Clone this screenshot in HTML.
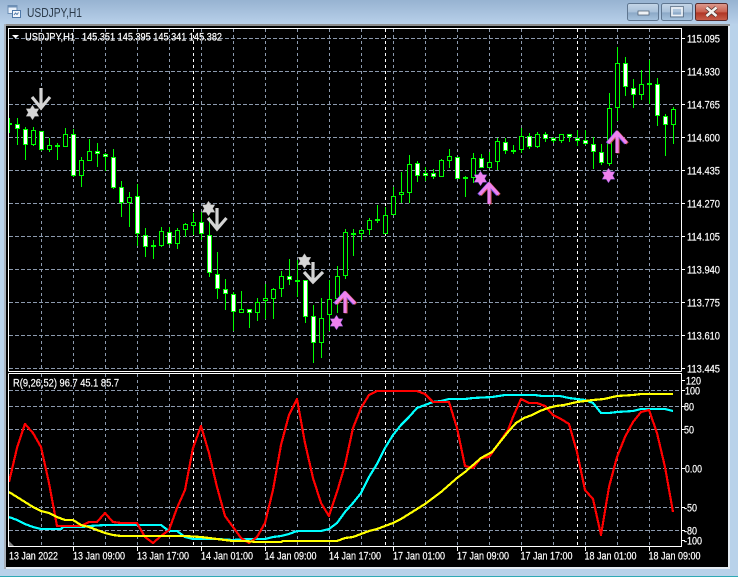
<!DOCTYPE html>
<html><head><meta charset="utf-8"><style>
html,body{margin:0;padding:0;background:#b9d2ea;width:738px;height:577px;overflow:hidden}
svg{display:block}
text{font-family:"Liberation Sans",sans-serif;font-size:11px;fill:#fff;stroke:#fff;stroke-width:.2}
</style></head><body>
<svg width="738" height="577" viewBox="0 0 738 577" xmlns="http://www.w3.org/2000/svg">
<defs>
<linearGradient id="t" x1="0" y1="0" x2="0" y2="1"><stop offset="0" stop-color="#97b3d1"/><stop offset="1" stop-color="#b8d0e9"/></linearGradient>
<linearGradient id="b1" x1="0" y1="0" x2="0" y2="1"><stop offset="0" stop-color="#c5d6e8"/><stop offset=".5" stop-color="#a9c1da"/><stop offset=".55" stop-color="#8ca9c7"/><stop offset="1" stop-color="#a8c4df"/></linearGradient>
<linearGradient id="b2" x1="0" y1="0" x2="0" y2="1"><stop offset="0" stop-color="#dd9c90"/><stop offset=".5" stop-color="#c9604f"/><stop offset=".55" stop-color="#b03524"/><stop offset="1" stop-color="#c8604c"/></linearGradient>
<clipPath id="c"><rect x="9" y="29" width="672" height="342"/></clipPath>
<clipPath id="s"><rect x="9" y="374" width="672" height="172"/></clipPath>
</defs>
<rect width="738" height="577" fill="#b9d2ea"/>
<rect width="738" height="24" fill="url(#t)"/>
<rect x="4" y="24" width="726" height="545" fill="#e4ebf2"/>
<rect x="4" y="24" width="726" height="2" fill="#8f8f8f"/>
<rect x="4" y="24" width="2" height="545" fill="#a8b0ba"/>
<rect x="6" y="26" width="722" height="541" fill="#000"/>
<rect x="0" y="576" width="738" height="1" fill="#2fa9b5"/>

<!-- title icon -->
<g>
<rect x="8" y="5.500" width="9" height="8" fill="#eaf2fb" stroke="#6d8fb5"/>
<rect x="8" y="5.500" width="9" height="2" fill="#6d8fb5"/>
<rect x="12.500" y="10.500" width="8" height="7" fill="#f2f6fb" stroke="#4f78a8"/>
<path d="M14 15l1.500-2 1.500 1.500 1.500-2" fill="none" stroke="#4f78a8"/>
</g>
<text x="27" y="17" textLength="55" lengthAdjust="spacingAndGlyphs" style="font-size:13px;fill:#2b3a4a;stroke:none">USDJPY,H1</text>

<!-- window buttons -->
<rect x="627.500" y="3.500" width="31" height="17" rx="2" fill="url(#b1)" stroke="#5f7690"/>
<rect x="638" y="11" width="11" height="4" fill="#eef2f6" stroke="#46566a" stroke-width=".7"/>
<rect x="661.500" y="3.500" width="31" height="17" rx="2" fill="url(#b1)" stroke="#5f7690"/>
<rect x="672" y="8" width="10" height="7.500" fill="none" stroke="#eef2f6" stroke-width="1.600"/>
<rect x="670.500" y="6.500" width="13" height="10.500" fill="none" stroke="#46566a" stroke-width=".6"/>
<rect x="695.500" y="3.500" width="32" height="17" rx="2" fill="url(#b2)" stroke="#5a2a2a"/>
<path d="M706.500 7.500l10 8.500M716.500 7.500l-10 8.500" stroke="#46302e" stroke-width="4"/>
<path d="M706.500 7.500l10 8.500M716.500 7.500l-10 8.500" stroke="#f4f2ee" stroke-width="2.600"/>

<!-- frames -->
<path d="M8.500 371.500V28.500H681.500V371.500M8.500 371.500H681.500" fill="none" stroke="#fff"/>
<path d="M8.500 373.500V546.500H681.500V373.500H8.500" fill="none" stroke="#fff"/>

<!-- grid -->
<g stroke="#8c9aae" fill="none" stroke-dasharray="4 2">
<path d="M9 38.500H681M9 71.500H681M9 104.500H681M9 137.500H681M9 170.500H681M9 203.500H681M9 236.500H681M9 269.500H681M9 302.500H681M9 335.500H681M9 368.500H681"/>
<path d="M9 390.500H681M9 406.500H681M9 429.500H681M9 468.500H681M9 507.500H681M9 530.500H681"/>
</g>
<g stroke="#8c9aae" fill="none" stroke-dasharray="3 3">
<path d="M41.500 29V371M73.500 29V371M105.500 29V371M137.500 29V371M169.500 29V371M201.500 29V371M233.500 29V371M265.500 29V371M297.500 29V371M329.500 29V371M361.500 29V371M393.500 29V371M425.500 29V371M457.500 29V371M489.500 29V371M521.500 29V371M553.500 29V371M585.500 29V371M617.500 29V371M649.500 29V371"/>
<path d="M41.500 374V546M73.500 374V546M105.500 374V546M137.500 374V546M169.500 374V546M201.500 374V546M233.500 374V546M265.500 374V546M297.500 374V546M329.500 374V546M361.500 374V546M393.500 374V546M425.500 374V546M457.500 374V546M489.500 374V546M521.500 374V546M553.500 374V546M585.500 374V546M617.500 374V546M649.500 374V546"/>
</g>
<path d="M193.500 29V371M385.500 29V371M577.500 29V371M193.500 374V546M385.500 374V546M577.500 374V546" stroke="#fff" stroke-dasharray="3 3" fill="none"/>

<!-- candles -->
<g clip-path="url(#c)" fill="none" stroke="#00ff00" shape-rendering="crispEdges">
<path d="M9.500 118V133M17.500 118V145M25.500 127V160M33.500 127V146M41.500 131V151M49.500 138V152M57.500 143V160M65.500 128V147M73.500 129V177M81.500 157V187M89.500 139V161M97.500 143V167M105.500 153V171M113.500 149V189M121.500 181V217M129.500 192V227M137.500 184V246M145.500 228V257M153.500 240V259M161.500 227V247M169.500 227V245M177.500 228V249M185.500 223V237M193.500 213V235M201.500 212V240M209.500 217V277M217.500 252V299M225.500 279V310M233.500 292V331M241.500 291V313M249.500 309V328M257.500 298V321M265.500 284V319M273.500 288V319M281.500 271V297M289.500 259V285M297.500 260V297M305.500 280V323M313.500 305V363M321.500 298V358M329.500 280V331M337.500 266V313M345.500 229V279M353.500 229V256M361.500 229V240M369.500 218V235M377.500 205V223M385.500 207V234M393.500 187V215M401.500 172V203M409.500 155V203M417.500 161V182M425.500 167V181M433.500 169V179M441.500 159V177M449.500 149V168M457.500 157V179M465.500 176V197M473.500 153V183M481.500 154V168M489.500 152V168M497.500 138V170M505.500 138V154M513.500 145V154M521.500 128V153M529.500 133V149M537.500 132V148M545.500 132V142M553.500 137V143M561.500 134V143M569.500 134V142M577.500 130V146M585.500 130V145M593.500 137V169M601.500 144V165M609.500 93V166M617.500 47V121M625.500 57V96M633.500 79V108M641.500 70V100M649.500 60V104M657.500 78V126M665.500 114V156M673.500 107V144"/>
<path stroke-width="2" d="M7 124h5M55 146h5M151 246h5M295 281h5M375 220h5M463 178h5M511 151h5M647 84h5"/>
<path fill="#000" d="M31.500 130.500h4v14h-4zM47.500 145.500h4v4h-4zM63.500 134.500h4v12h-4zM79.500 160.500h4v15h-4zM87.500 151.500h4v9h-4zM127.500 197.500h4v5h-4zM159.500 231.500h4v14h-4zM175.500 230.500h4v13h-4zM183.500 224.500h4v5h-4zM191.500 222.500h4v3h-4zM239.500 309.500h4v3h-4zM255.500 302.500h4v10h-4zM263.500 298.500h4v2h-4zM271.500 289.500h4v9h-4zM279.500 276.500h4v12h-4zM319.500 318.500h4v24h-4zM327.500 299.500h4v15h-4zM335.500 276.500h4v22h-4zM343.500 232.500h4v43h-4zM359.500 230.500h4v3h-4zM367.500 220.500h4v9h-4zM383.500 215.500h4v18h-4zM391.500 196.500h4v18h-4zM399.500 192.500h4v2h-4zM407.500 164.500h4v28h-4zM439.500 160.500h4v16h-4zM447.500 156.500h4v4h-4zM471.500 158.500h4v19h-4zM487.500 162.500h4v5h-4zM495.500 141.500h4v20h-4zM519.500 136.500h4v13h-4zM535.500 134.500h4v12h-4zM559.500 134.500h4v6h-4zM607.500 108.500h4v55h-4zM615.500 63.500h4v44h-4zM639.500 84.500h4v10h-4zM671.500 109.500h4v15h-4z"/>
<path fill="#fff" d="M15.500 124.500h4v4h-4zM23.500 129.500h4v15h-4zM39.500 131.500h4v18h-4zM71.500 134.500h4v41h-4zM95.500 151.500h4v2h-4zM103.500 154.500h4v2h-4zM111.500 157.500h4v30h-4zM119.500 187.500h4v15h-4zM135.500 196.500h4v37h-4zM143.500 235.500h4v11h-4zM167.500 232.500h4v11h-4zM199.500 222.500h4v11h-4zM207.500 235.500h4v37h-4zM215.500 274.500h4v14h-4zM223.500 289.500h4v4h-4zM231.500 294.500h4v17h-4zM247.500 309.500h4v3h-4zM287.500 276.500h4v3h-4zM303.500 280.500h4v36h-4zM311.500 316.500h4v26h-4zM351.500 233.500h4v1h-4zM415.500 163.500h4v12h-4zM423.500 173.500h4v2h-4zM431.500 173.500h4v3h-4zM455.500 157.500h4v21h-4zM479.500 158.500h4v9h-4zM503.500 142.500h4v8h-4zM527.500 136.500h4v10h-4zM543.500 134.500h4v4h-4zM551.500 138.500h4v2h-4zM567.500 134.500h4v2h-4zM575.500 138.500h4v2h-4zM583.500 140.500h4v3h-4zM591.500 144.500h4v7h-4zM599.500 152.500h4v10h-4zM623.500 63.500h4v23h-4zM631.500 88.500h4v6h-4zM655.500 84.500h4v31h-4zM663.500 116.500h4v8h-4z"/>
</g>

<!-- gray signals -->
<g fill="#d6d6d6" stroke="#a8a8a8" stroke-width=".5">
<polygon transform="translate(32.500 112.500)" points="0,-7.300 2.300,-3.700 6.300,-3.700 4.200,0 6.300,3.700 2.300,3.700 0,7.300 -2.300,3.700 -6.300,3.700 -4.200,0 -6.300,-3.700 -2.300,-3.700"/>
<polygon transform="translate(208.500 208.500)" points="0,-7.300 2.300,-3.700 6.300,-3.700 4.200,0 6.300,3.700 2.300,3.700 0,7.300 -2.300,3.700 -6.300,3.700 -4.200,0 -6.300,-3.700 -2.300,-3.700"/>
<polygon transform="translate(304.500 261)" points="0,-7.300 2.300,-3.700 6.300,-3.700 4.200,0 6.300,3.700 2.300,3.700 0,7.300 -2.300,3.700 -6.300,3.700 -4.200,0 -6.300,-3.700 -2.300,-3.700"/>
</g>
<g fill="none" stroke="#d4d4d4" stroke-width="3.200">
<path d="M41 88V107M32 97L41 108L50 97"/>
<path d="M217 208V228M208 218L217 229L226.500 218"/>
<path d="M313 262V282M304 272L313 282L323 272"/>
</g>
<!-- pink signals -->
<g fill="none" stroke-width="3.200">
<g stroke="#c9554f" transform="translate(1 .4)"><path d="M345 294V313M335.500 303.500L345 293L355 303.500"/><path d="M489 185V204M479.500 194.500L489 184L498.500 194.500"/><path d="M617 133V153M608 143L617 132.500L626.500 143"/></g>
<g stroke="#6a4ee0" transform="translate(-1 .3)"><path d="M335.500 303.500L345 293L355 303.500"/><path d="M479.500 194.500L489 184L498.500 194.500"/><path d="M608 143L617 132.500L626.500 143"/></g>
<g stroke="#ee82ee"><path d="M345 294V313M335.500 303.500L345 293L355 303.500"/><path d="M489 185V204M479.500 194.500L489 184L498.500 194.500"/><path d="M617 133V153M608 143L617 132.500L626.500 143"/></g>
</g>
<g fill="#ee82ee" stroke="#8a52d8" stroke-width=".5">
<polygon transform="translate(336.500 322.500)" points="0,-7.300 2.300,-3.700 6.300,-3.700 4.200,0 6.300,3.700 2.300,3.700 0,7.300 -2.300,3.700 -6.300,3.700 -4.200,0 -6.300,-3.700 -2.300,-3.700"/>
<polygon transform="translate(480.500 178.500)" points="0,-7.300 2.300,-3.700 6.300,-3.700 4.200,0 6.300,3.700 2.300,3.700 0,7.300 -2.300,3.700 -6.300,3.700 -4.200,0 -6.300,-3.700 -2.300,-3.700"/>
<polygon transform="translate(608.500 175.500)" points="0,-7.300 2.300,-3.700 6.300,-3.700 4.200,0 6.300,3.700 2.300,3.700 0,7.300 -2.300,3.700 -6.300,3.700 -4.200,0 -6.300,-3.700 -2.300,-3.700"/>
</g>

<!-- oscillator -->
<g clip-path="url(#s)" fill="none" stroke-width="2.200" stroke-linejoin="round" shape-rendering="crispEdges">
<polyline stroke="#00ffff" points="9,517 17,520 25,524 33,527 41,529 61,529 63,527 83,527 89,526 105,525 161,525 169,531 177,531 185,537 193,539 209,539 217,539 233,540 246,539 265,539 273,537 281,536 289,534 297,531 321,531 329,529 337,523 345,512 353,503 361,493 369,477 377,464 385,448 393,435 401,425 409,417 417,408 425,405 433,402 441,401 449,399 465,399 473,398 492,397 505,395 535,395 542,396 560,396 569,398 577,399 585,400 593,403 601,413 609,413 617,412 633,411 641,409 665,409 673,411"/>
<polyline stroke="#ff0000" points="9,482 17,448 25,424 33,433 41,447 49,483 57,526 81,526 89,522 97,522 105,513 113,522 121,523 137,523 145,537 153,543 161,536 169,530 177,508 185,490 193,448 201,426 209,453 217,487 225,516 233,527 241,538 249,543 257,537 265,523 273,490 281,445 289,415 297,399 305,443 313,478 321,503 329,516 337,492 345,465 353,428 361,408 369,395 377,391 417,391 425,394 433,402 449,402 457,428 465,466 473,468 481,458 489,457 492,453 508,430 513,417 521,399 529,403 537,403 545,406 553,415 561,419 569,424 577,452 585,490 593,499 601,535 609,487 617,457 625,437 633,422 641,412 649,410 657,433 665,467 673,512"/>
<polyline stroke="#ffff00" points="9,492 17,497 25,502 33,507 41,511 49,513 57,517 65,520 73,520 81,525 89,527 97,530 105,533 113,535 121,536 185,536 201,537 217,539 233,541 246,541 256,542 281,542 283,541 337,541 345,538 353,537 361,534 369,531 377,529 385,526 393,523 401,519 409,514 417,509 425,504 433,498 441,492 449,485 457,478 465,472 473,465 481,458 492,452 500,442 508,432 516,423 524,418 532,415 540,411 548,408 556,406 564,405 577,402 585,401 593,400 604,399 617,396 633,395 641,394 673,394"/>
</g>
<polygon points="9,541 14,546 9,546" fill="#808080"/>

<!-- ticks -->
<path d="M682 38.500h3M682 71.500h3M682 104.500h3M682 137.500h3M682 170.500h3M682 203.500h3M682 236.500h3M682 269.500h3M682 302.500h3M682 335.500h3M682 368.500h3M682 380.500h3M682 390.500h3M682 406.500h3M682 429.500h3M682 468.500h3M682 507.500h3M682 530.500h3M682 540.500h3M73.500 547v4M137.500 547v4M201.500 547v4M265.500 547v4M329.500 547v4M393.500 547v4M457.500 547v4M521.500 547v4M585.500 547v4M649.500 547v4" stroke="#fff" fill="none"/>

<!-- labels -->
<polygon points="12,35 19,35 15.500,38.500" fill="#fff"/>
<text x="25" y="40.500" textLength="50" lengthAdjust="spacingAndGlyphs">USDJPY,H1</text>
<text x="82" y="40.500" textLength="140" lengthAdjust="spacingAndGlyphs">145.351 145.395 145.341 145.382</text>
<text x="13" y="386.500" textLength="106" lengthAdjust="spacingAndGlyphs">R(9,26,52) 96.7 45.1 85.7</text>

<text x="687" y="42.500" textLength="33" lengthAdjust="spacingAndGlyphs">115.095</text>
<text x="687" y="75.500" textLength="33" lengthAdjust="spacingAndGlyphs">114.930</text>
<text x="687" y="108.500" textLength="33" lengthAdjust="spacingAndGlyphs">114.765</text>
<text x="687" y="141.500" textLength="33" lengthAdjust="spacingAndGlyphs">114.600</text>
<text x="687" y="174.500" textLength="33" lengthAdjust="spacingAndGlyphs">114.435</text>
<text x="687" y="207.500" textLength="33" lengthAdjust="spacingAndGlyphs">114.270</text>
<text x="687" y="240.500" textLength="33" lengthAdjust="spacingAndGlyphs">114.105</text>
<text x="687" y="273.500" textLength="33" lengthAdjust="spacingAndGlyphs">113.940</text>
<text x="687" y="306.500" textLength="33" lengthAdjust="spacingAndGlyphs">113.775</text>
<text x="687" y="339.500" textLength="33" lengthAdjust="spacingAndGlyphs">113.610</text>
<text x="687" y="372.500" textLength="33" lengthAdjust="spacingAndGlyphs">113.445</text>

<text x="686" y="384.500" textLength="15" lengthAdjust="spacingAndGlyphs">120</text>
<text x="685" y="394.500" textLength="15" lengthAdjust="spacingAndGlyphs">100</text>
<text x="684" y="410.500" textLength="10" lengthAdjust="spacingAndGlyphs">80</text>
<text x="684" y="433.500" textLength="10" lengthAdjust="spacingAndGlyphs">50</text>
<text x="685" y="472.500" textLength="17" lengthAdjust="spacingAndGlyphs">0.00</text>
<text x="684" y="511.500" textLength="13" lengthAdjust="spacingAndGlyphs">-50</text>
<text x="684" y="534.500" textLength="13" lengthAdjust="spacingAndGlyphs">-80</text>
<text x="684" y="544.500" textLength="18" lengthAdjust="spacingAndGlyphs">-100</text>

<text x="9" y="559.500" textLength="49" lengthAdjust="spacingAndGlyphs">13 Jan 2022</text>
<text x="73" y="559.500" textLength="52" lengthAdjust="spacingAndGlyphs">13 Jan 09:00</text>
<text x="137" y="559.500" textLength="52" lengthAdjust="spacingAndGlyphs">13 Jan 17:00</text>
<text x="201" y="559.500" textLength="52" lengthAdjust="spacingAndGlyphs">14 Jan 01:00</text>
<text x="264.500" y="559.500" textLength="52" lengthAdjust="spacingAndGlyphs">14 Jan 09:00</text>
<text x="329" y="559.500" textLength="52" lengthAdjust="spacingAndGlyphs">14 Jan 17:00</text>
<text x="393" y="559.500" textLength="52" lengthAdjust="spacingAndGlyphs">17 Jan 01:00</text>
<text x="457" y="559.500" textLength="52" lengthAdjust="spacingAndGlyphs">17 Jan 09:00</text>
<text x="520.500" y="559.500" textLength="52" lengthAdjust="spacingAndGlyphs">17 Jan 17:00</text>
<text x="584.500" y="559.500" textLength="52" lengthAdjust="spacingAndGlyphs">18 Jan 01:00</text>
<text x="648.500" y="559.500" textLength="52" lengthAdjust="spacingAndGlyphs">18 Jan 09:00</text>
</svg>
</body></html>
